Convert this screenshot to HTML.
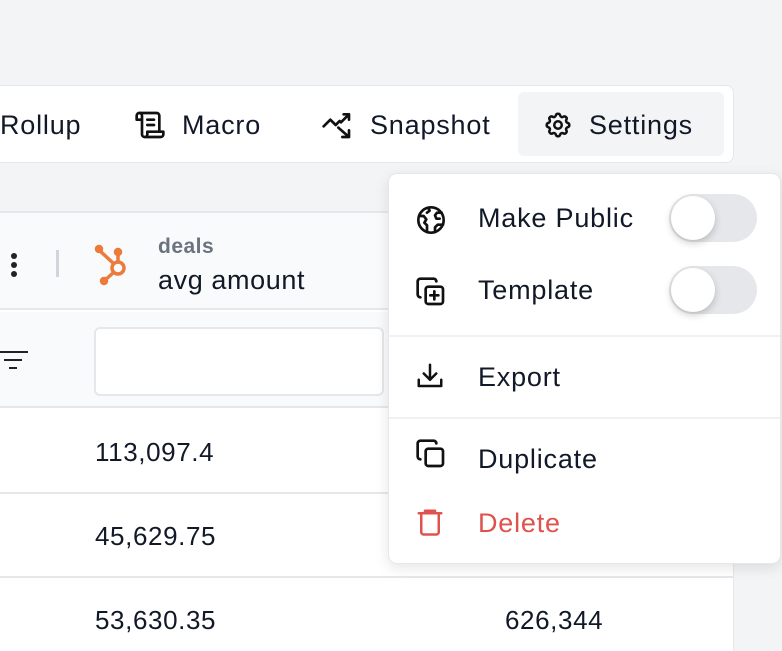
<!DOCTYPE html>
<html><head><style>
*{box-sizing:border-box;margin:0;padding:0}
body{width:782px;height:642px;overflow:hidden;background:#f3f4f6;font-family:"Liberation Sans",sans-serif;color:#111827;position:relative}
.abs{position:absolute}
.tb{left:-10px;top:85px;width:744px;height:78px;background:#fff;border:1px solid #e5e7eb;border-radius:8px}
.ti{position:absolute;top:107px;font-size:27px;letter-spacing:0.8px;line-height:36px;display:flex;align-items:center;gap:16px}
.table{left:0;top:211px;width:734px;height:440px;background:#fff;border-top:2px solid #e5e7eb;border-right:1px solid #e5e7eb}
.menu{left:388px;top:173px;width:393px;height:391px;background:#fff;border:1px solid #e5e7eb;border-radius:9px;box-shadow:0 4px 14px rgba(0,0,0,.1)}
.mi{position:absolute;left:89px;font-size:27px;letter-spacing:0.8px}
.ic{position:absolute;left:26px}
.tog{position:absolute;left:280px;width:88px;height:48px;border-radius:24px;background:#e5e7eb}
.tog:after{content:"";position:absolute;left:2px;top:2px;width:44px;height:44px;border-radius:50%;background:#fff;box-shadow:0 3px 8px rgba(0,0,0,.2)}
.num{font-size:26px;letter-spacing:0.6px}
</style></head><body>
<div class="abs tb"></div>
<div class="abs" style="left:518px;top:92px;width:206px;height:64px;background:#f3f4f6;border-radius:6px"></div>
<div class="ti" style="left:0">Rollup</div>
<div class="ti" style="left:134px"><svg width="32" height="32" viewBox="0 0 24 24" fill="none" stroke="#111" stroke-width="2" stroke-linecap="round" stroke-linejoin="round"><path d="M8 21h12a2 2 0 0 0 2-2v-2H10v2a2 2 0 1 1-4 0V5a2 2 0 1 0-4 0v3h4"/><path d="M19 17V5a2 2 0 0 0-2-2H4"/><path d="M15 8h-5M15 12h-5"/></svg>Macro</div>
<div class="ti" style="left:320px"><svg width="34" height="32" viewBox="0 0 24 24" fill="none" stroke="#111" stroke-width="2" stroke-linecap="round" stroke-linejoin="round"><path d="M2 13l5-5 4 4 3-3"/><path d="M17 4h4v4M21 4l-6 6"/><path d="M13 14l8 7M21 16v5h-5"/></svg>Snapshot</div>
<div class="ti" style="left:543px"><svg width="30" height="30" viewBox="0 0 24 24" fill="none" stroke="#111" stroke-width="2" stroke-linecap="round" stroke-linejoin="round"><path d="M10.3 4.3c.4-1.8 3-1.8 3.4 0a1.7 1.7 0 0 0 2.6 1.1c1.5-.9 3.3.8 2.4 2.4a1.7 1.7 0 0 0 1 2.5c1.8.5 1.8 3 0 3.5a1.7 1.7 0 0 0-1 2.5c.9 1.5-.9 3.300-2.400 2.400a1.7 1.7 0 0 0-2.6 1c-.4 1.8-3 1.8-3.4 0a1.7 1.7 0 0 0-2.6-1c-1.5.9-3.3-.9-2.4-2.4a1.7 1.7 0 0 0-1-2.5c-1.8-.5-1.8-3 0-3.5a1.7 1.7 0 0 0 1-2.5c-.9-1.6.9-3.3 2.4-2.4 1 .6 2.3.1 2.6-1.1z"/><circle cx="12" cy="12" r="3"/></svg>Settings</div>

<div class="abs table">
 <div class="abs" style="left:0;top:0;width:733px;height:97px;background:#f9fafb;border-bottom:2px solid #e5e7eb"></div>
 <div class="abs" style="left:0;top:99px;width:733px;height:96px;background:#f9fafb;border-bottom:2px solid #e5e7eb"></div>
 <div class="abs" style="left:0;top:279px;width:733px;height:2px;background:#e5e7eb"></div>
 <div class="abs" style="left:0;top:363px;width:733px;height:2px;background:#e5e7eb"></div>
 <div class="abs" style="left:11px;top:40px;width:6px;height:6px;border-radius:3px;background:#222;box-shadow:0 9px 0 #222,0 18px 0 #222"></div>
 <div class="abs" style="left:56px;top:37px;width:3px;height:27px;background:#d1d5db"></div>
 <svg class="abs" style="left:94px;top:30px" width="40" height="44" viewBox="0 0 40 44" fill="none" stroke="#ec7a3a" stroke-width="3.5" stroke-linecap="round"><circle cx="24" cy="25" r="6"/><path d="M5 7l14 13M24 10v9M19 30l-9 8"/><circle cx="5" cy="6" r="2.5" fill="#ec7a3a"/><circle cx="24" cy="9" r="2.5" fill="#ec7a3a"/><circle cx="10" cy="38" r="2.5" fill="#ec7a3a"/></svg>
 <div class="abs" style="left:158px;top:22px;font-size:21px;font-weight:bold;color:#6b7280;letter-spacing:0.5px">deals</div>
 <div class="abs" style="left:158px;top:52px;font-size:27px;letter-spacing:0.6px">avg amount</div>
 <div class="abs" style="left:0;top:138px;width:28px;height:2px;background:#222"></div>
 <div class="abs" style="left:4px;top:146px;width:18px;height:2px;background:#222"></div>
 <div class="abs" style="left:9px;top:154px;width:8px;height:2px;background:#222"></div>
 <div class="abs" style="left:94px;top:114px;width:290px;height:69px;background:#fff;border:2px solid #e5e7eb;border-radius:6px"></div>
 <div class="abs num" style="left:95px;top:224px">113,097.4</div>
 <div class="abs num" style="left:95px;top:308px">45,629.75</div>
 <div class="abs num" style="left:95px;top:392px">53,630.35</div>
 <div class="abs num" style="left:505px;top:392px">626,344</div>
</div>

<div class="abs menu">
 <svg class="ic" style="top:30px" width="32" height="32" viewBox="0 0 24 24" fill="none" stroke="#111" stroke-width="2" stroke-linecap="round" stroke-linejoin="round"><circle cx="12" cy="12" r="9.5"/><path d="M3.5 9h3l2 2.5-1.5 2.5 2 2v5M15 21v-3.5l2-2h4M20 6.5h-3.5l-1.5 2 1 2.5h2.5M10 3l1 2-2 1.5"/></svg>
 <div class="mi" style="top:29px">Make Public</div>
 <div class="tog" style="top:20px"></div>
 <svg class="ic" style="top:102px" width="32" height="32" viewBox="0 0 24 24" fill="none" stroke="#111" stroke-width="2" stroke-linecap="round" stroke-linejoin="round"><rect x="8" y="8" width="13" height="13" rx="2"/><path d="M4 16c-1 0-2-1-2-2V4c0-1 1-2 2-2h10c1 0 2 1 2 2M14.5 11.5v6M11.5 14.5h6"/></svg>
 <div class="mi" style="top:101px">Template</div>
 <div class="tog" style="top:92px"></div>
 <div class="abs" style="left:0;top:161px;width:391px;height:2px;background:#f0f1f3"></div>
 <svg class="ic" style="top:187px" width="30" height="30" viewBox="0 0 24 24" fill="none" stroke="#111" stroke-width="2" stroke-linecap="round" stroke-linejoin="round"><path d="M3 15v5h18v-5M12 3v12M7 10l5 5 5-5"/></svg>
 <div class="mi" style="top:188px">Export</div>
 <div class="abs" style="left:0;top:243px;width:391px;height:2px;background:#f0f1f3"></div>
 <svg class="ic" style="top:264px" width="32" height="32" viewBox="0 0 24 24" fill="none" stroke="#111" stroke-width="2" stroke-linecap="round" stroke-linejoin="round"><rect x="8" y="8" width="13" height="13" rx="2"/><path d="M4 16c-1 0-2-1-2-2V4c0-1 1-2 2-2h10c1 0 2 1 2 2"/></svg>
 <div class="mi" style="top:270px">Duplicate</div>
 <svg class="ic" style="top:332px" width="30" height="32" viewBox="0 0 24 24" fill="none" stroke="#e0524e" stroke-width="2" stroke-linecap="round" stroke-linejoin="round"><path d="M3 5h18M8 5V3h8v2M5 5v15a2 2 0 0 0 2 2h10a2 2 0 0 0 2-2V5"/></svg>
 <div class="mi" style="top:334px;color:#e0524e">Delete</div>
</div>
</body></html>
